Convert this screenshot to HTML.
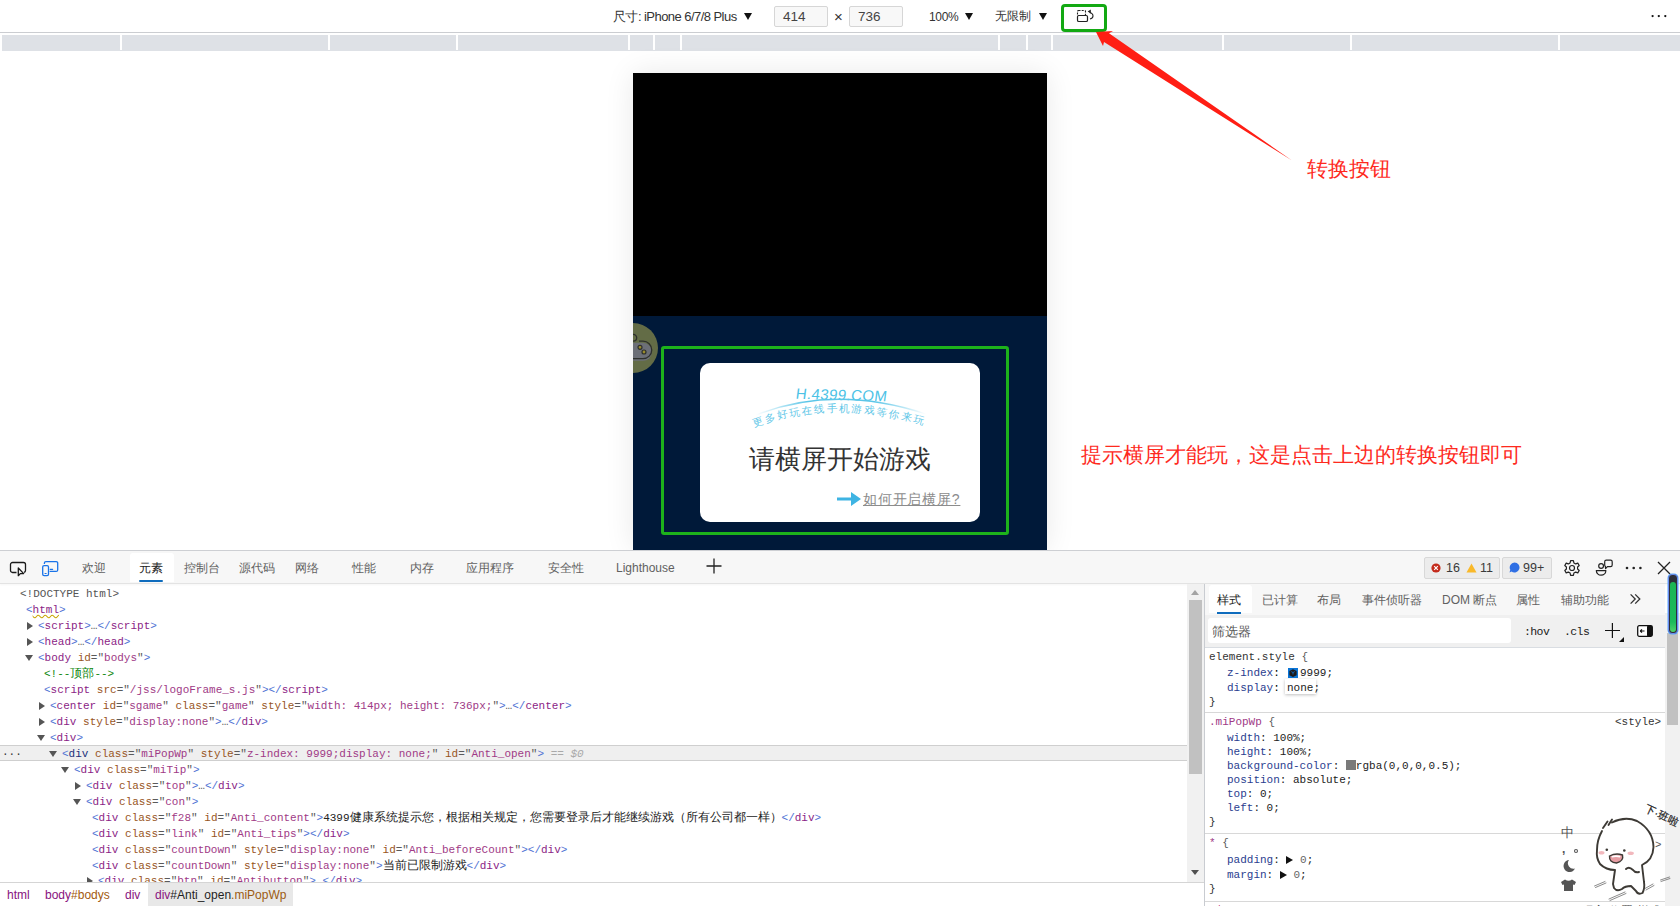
<!DOCTYPE html>
<html><head><meta charset="utf-8">
<style>
*{margin:0;padding:0;box-sizing:border-box}
html,body{width:1680px;height:906px;overflow:hidden;background:#fff;font-family:"Liberation Sans",sans-serif;position:relative}
.a{position:absolute;white-space:nowrap}
.mono{font-family:"Liberation Mono",monospace}
/* toolbar */
#tb{left:0;top:0;width:1680px;height:32px;background:#fff;font-size:13px;color:#333}
#tbline{left:0;top:32px;width:1680px;height:1px;background:#cbcdd1}
#mq{left:2px;top:35px;width:1678px;height:16px;background:#dee1e6}
.sep{top:35px;width:2px;height:15px;background:#fff}
.inp{top:6px;height:21px;border:1px solid #d6d6d6;background:#f8f8f8;border-radius:2px;font-size:13.5px;color:#444;padding-left:8px;line-height:19px}
.tri{width:0;height:0;border-left:4px solid transparent;border-right:4px solid transparent;border-top:7px solid #111}
/* phone */
#phone{left:633px;top:73px;width:414px;height:477px;background:#001939;box-shadow:0 0 28px rgba(0,0,0,.09)}
#black{left:633px;top:73px;width:414px;height:243px;background:#000}
/* devtools */
#dt{left:0;top:550px;width:1680px;height:356px;background:#fff;border-top:1px solid #cdcfd3}
#tabs{left:0;top:551px;width:1680px;height:33px;background:#f7f7f7;border-bottom:1px solid #e3e3e3;box-shadow:0 1px 2px rgba(0,0,0,.04)}
.tab{font-size:12px;color:#616161;top:560px}
.code{font-family:"Liberation Mono",monospace;font-size:11px;line-height:16px;height:16px}
.b{color:#4f72d4}.t{color:#8b1d85}.an{color:#98551d}.av{color:#a03a86}.cm{color:#0b850b}.g{color:#5a5a5a}
.tr{width:0;height:0;border-top:4px solid transparent;border-bottom:4px solid transparent;border-left:6px solid #555}
.td{width:0;height:0;border-left:4px solid transparent;border-right:4px solid transparent;border-top:6px solid #555}
.sp{color:#2a3d8f}
.cj{font-size:12px;font-family:"Liberation Sans",sans-serif;line-height:0}
</style></head><body>

<!-- top toolbar -->
<div class="a" id="tb"></div>
<div class="a" style="left:613px;top:8px;font-size:13px;color:#333;letter-spacing:-0.55px">尺寸: iPhone 6/7/8 Plus</div>
<div class="a tri" style="left:744px;top:13px"></div>
<div class="a inp" style="left:774px;width:54px">414</div>
<div class="a" style="left:834px;top:8px;font-size:15px;color:#333">×</div>
<div class="a inp" style="left:849px;width:54px">736</div>
<div class="a" style="left:929px;top:10px;font-size:12px;color:#333;letter-spacing:-0.3px">100%</div>
<div class="a tri" style="left:965px;top:13px"></div>
<div class="a" style="left:995px;top:8px;font-size:12px;color:#333">无限制</div>
<div class="a tri" style="left:1039px;top:13px"></div>
<div class="a" style="left:1061px;top:4px;width:46px;height:28px;border:3px solid #13a913;border-radius:4px"></div>
<svg class="a" style="left:1075px;top:8px" width="22" height="16" viewBox="0 0 22 16">
 <rect x="2.5" y="2.5" width="8" height="5" rx="1" fill="none" stroke="#222" stroke-width="1.1" stroke-dasharray="2 1.2"/>
 <rect x="2.5" y="7.5" width="10" height="6" rx="1.3" fill="#fff" stroke="#222" stroke-width="1.2"/>
 <path d="M14.5 4.5 C17 5,18 7,18 8 C18 9.5,17 10.5,15 11" fill="none" stroke="#222" stroke-width="1.1"/>
 <path d="M12.6 3.6 L15.8 1.6 L15.9 5.6 Z" fill="#222"/>
</svg>
<svg class="a" style="left:1648px;top:12px" width="22" height="8" viewBox="0 0 22 8"><circle cx="4.6" cy="4.1" r="1.15" fill="#111"/><circle cx="10.8" cy="4.1" r="1.15" fill="#111"/><circle cx="17.3" cy="4.1" r="1.15" fill="#111"/></svg>
<div class="a" id="tbline"></div>
<div class="a" id="mq"></div>
<div class="a sep" style="left:120px"></div>
<div class="a sep" style="left:328px"></div>
<div class="a sep" style="left:456px"></div>
<div class="a sep" style="left:628px"></div>
<div class="a sep" style="left:653px"></div>
<div class="a sep" style="left:680px"></div>
<div class="a sep" style="left:998px"></div>
<div class="a sep" style="left:1026px"></div>
<div class="a sep" style="left:1051px"></div>
<div class="a sep" style="left:1222px"></div>
<div class="a sep" style="left:1350px"></div>
<div class="a sep" style="left:1558px"></div>

<!-- phone -->
<div class="a" id="phone"></div>
<div class="a" id="black"></div>

<!-- devtools -->
<div class="a" id="dt"></div>
<div class="a" id="tabs"></div>
<!-- phone content -->
<div class="a" style="left:633px;top:323px;width:25px;height:50px;border-radius:0 25px 25px 0;background:#636c46"></div>
<svg class="a" style="left:633px;top:323px" width="25" height="50" viewBox="0 0 25 50">
 <path d="M0 19.8 H10 A9 9 0 0 1 10 37.8 H0 Z" fill="#6c6f77"/>
 <path d="M6 18.2 H10 A8.75 8.75 0 0 1 10 35.7 H0" fill="none" stroke="#2e302c" stroke-width="1.3"/>
 <circle cx="0.3" cy="14.8" r="3.4" fill="none" stroke="#2e302c" stroke-width="1.3"/>
 <circle cx="7" cy="24.3" r="2" fill="#9a8c2a" stroke="#2e302c" stroke-width="1.2"/>
 <circle cx="11" cy="29" r="2" fill="#9a8c2a" stroke="#2e302c" stroke-width="1.2"/>
</svg>
<div class="a" style="left:661px;top:346px;width:348px;height:189px;border:3px solid #1db21b;border-radius:3px"></div>
<div class="a" style="left:700px;top:363px;width:280px;height:159px;background:#fff;border-radius:10px"></div>
<svg class="a" style="left:740px;top:375px" width="200" height="60" viewBox="0 0 200 60">
 <defs><linearGradient id="fade" x1="0" x2="1"><stop offset="0" stop-color="#5cc6e8" stop-opacity="0"/><stop offset="0.3" stop-color="#5cc6e8"/><stop offset="0.7" stop-color="#5cc6e8"/><stop offset="1" stop-color="#5cc6e8" stop-opacity="0"/></linearGradient></defs>
 <text x="55" y="25" font-family="Liberation Sans" font-size="15" fill="#4cc2e6" textLength="91" lengthAdjust="spacing" transform="rotate(1.5 100 20) translate(3 0) skewX(-6)">H.4399.COM</text>
 <path d="M16 40 Q95 9 186 39" fill="none" stroke="url(#fade)" stroke-width="1.3"/>
 <path id="arc" d="M14 52 Q95 22 190 52" fill="none"/>
 <text font-family="Liberation Serif" font-size="10.5" fill="#62c7e8" letter-spacing="1.4"><textPath href="#arc">更多好玩在线手机游戏等你来玩</textPath></text>
</svg>
<div class="a" style="left:749px;top:444px;font-size:26px;color:#333;line-height:30px">请横屏开始游戏</div>
<svg class="a" style="left:836px;top:491px" width="26" height="16" viewBox="0 0 26 16"><path d="M1 6.5 H15 V1 L25 8 L15 15 V9.5 H1 Z" fill="#3eb4e3"/></svg>
<div class="a" style="left:863px;top:490px;font-size:14px;color:#8c8c8c;text-decoration:underline;line-height:18px;letter-spacing:0.8px">如何开启横屏?</div>

<!-- annotations -->
<svg class="a" style="left:0;top:0" width="1680" height="200" viewBox="0 0 1680 200">
 <path d="M1096 32 L1113 31 L1109 33.2 L1292 160.5 L1104 42 L1103 46 Z" fill="#ff1e14"/>
</svg>
<div class="a" style="left:1307px;top:157px;font-size:21px;color:#fe2a1e;line-height:24px">转换按钮</div>
<div class="a" style="left:1081px;top:443px;font-size:21px;color:#fe2a1e;line-height:24px">提示横屏才能玩，这是点击上边的转换按钮即可</div>


<!-- devtools tabs -->
<svg class="a" style="left:9px;top:560px" width="19" height="17" viewBox="0 0 19 17">
 <path d="M7.5 12.5 H3.5 A2 2 0 0 1 1.5 10.5 V4.5 A2 2 0 0 1 3.5 2.5 H14.5 A2 2 0 0 1 16.5 4.5 V10.5 A2 2 0 0 1 15 12.4" fill="none" stroke="#1a1a1a" stroke-width="1.3"/>
 <path d="M9.3 8 L9.3 15.7 L11.3 13.6 L14.7 13.6 Z" fill="#f4f4f4" stroke="#1a1a1a" stroke-width="1.3" stroke-linejoin="round"/>
</svg>
<svg class="a" style="left:41px;top:560px" width="18" height="17" viewBox="0 0 18 17">
 <rect x="1.7" y="5.6" width="5.8" height="10" rx="1.4" fill="none" stroke="#1a73e8" stroke-width="1.3"/>
 <path d="M3.4 3.4 V3 A1.5 1.5 0 0 1 4.9 1.6 H15.2 A1.5 1.5 0 0 1 16.7 3.1 V9.9 A1.5 1.5 0 0 1 15.2 11.4 H9.2" fill="none" stroke="#1a73e8" stroke-width="1.3" stroke-linecap="round"/>
 <path d="M9.2 9.3 H11.6" stroke="#1a73e8" stroke-width="1.2" stroke-linecap="round"/>
 <path d="M4 13.5 H5.2" stroke="#1a73e8" stroke-width="1.1" stroke-linecap="round"/>
</svg>
<div class="a tab" style="left:82px">欢迎</div>
<div class="a" style="left:130px;top:553px;width:44px;height:29px;background:#fff;border-radius:3px 3px 0 0"></div>
<div class="a tab" style="left:139px;color:#222">元素</div>
<div class="a" style="left:139px;top:580px;width:24px;height:2px;background:#0f6cbd;border-radius:1px"></div>
<div class="a tab" style="left:184px">控制台</div>
<div class="a tab" style="left:239px">源代码</div>
<div class="a tab" style="left:295px">网络</div>
<div class="a tab" style="left:352px">性能</div>
<div class="a tab" style="left:410px">内存</div>
<div class="a tab" style="left:466px">应用程序</div>
<div class="a tab" style="left:548px">安全性</div>
<div class="a tab" style="left:616px;top:561px">Lighthouse</div>
<svg class="a" style="left:706px;top:558px" width="16" height="16" viewBox="0 0 16 16"><path d="M8 0.5 V15.5 M0.5 8 H15.5" stroke="#222" stroke-width="1.3"/></svg>

<!-- right toolbar -->
<div class="a" style="left:1424px;top:557px;width:76px;height:22px;background:#ececec;border:1px solid #d8d8d8;border-radius:2px"></div>
<div class="a" style="left:1502px;top:557px;width:50px;height:22px;background:#ececec;border:1px solid #d8d8d8;border-radius:2px"></div>
<svg class="a" style="left:1431px;top:563px" width="10" height="10" viewBox="0 0 10 10"><circle cx="5" cy="5" r="4.6" fill="#c42b1c"/><path d="M3.2 3.2 L6.8 6.8 M6.8 3.2 L3.2 6.8" stroke="#fff" stroke-width="1.2"/></svg>
<div class="a" style="left:1446px;top:561px;font-size:12.5px;color:#3a3a3a">16</div>
<svg class="a" style="left:1466px;top:563px" width="11" height="10" viewBox="0 0 11 10"><path d="M5.5 0.5 L10.5 9.5 H0.5 Z" fill="#f9b92a"/></svg>
<div class="a" style="left:1480px;top:561px;font-size:12.5px;color:#3a3a3a">11</div>
<svg class="a" style="left:1509px;top:562px" width="11" height="11" viewBox="0 0 11 11"><path d="M5.5 0.5 A5 5 0 1 1 2.5 9.5 L0.5 10.5 L1.3 7.8 A5 5 0 0 1 5.5 0.5 Z" fill="#2f6fe4"/></svg>
<div class="a" style="left:1523px;top:561px;font-size:12.5px;color:#3a3a3a">99+</div>
<svg class="a" style="left:1563px;top:559px" width="18" height="18" viewBox="0 0 18 18"><path d="M7.6 1.2 H10.4 L10.9 3.4 L12.7 4.4 L14.8 3.6 L16.2 6 L14.6 7.5 V9.5 L16.2 11 L14.8 13.4 L12.7 12.6 L10.9 13.6 L10.4 15.8 H7.6 L7.1 13.6 L5.3 12.6 L3.2 13.4 L1.8 11 L3.4 9.5 V7.5 L1.8 6 L3.2 3.6 L5.3 4.4 L7.1 3.4 Z" fill="none" stroke="#222" stroke-width="1.2" stroke-linejoin="round" transform="translate(0 0.5)"/><circle cx="9" cy="9" r="2.5" fill="none" stroke="#222" stroke-width="1.2"/></svg>
<svg class="a" style="left:1595px;top:559px" width="19" height="18" viewBox="0 0 19 18"><circle cx="6.1" cy="7" r="2.4" fill="none" stroke="#222" stroke-width="1.2"/><path d="M1.3 11.6 H10.9 A4.8 4.6 0 0 1 1.3 11.6 Z" fill="none" stroke="#222" stroke-width="1.2" stroke-linejoin="round"/><path d="M11.3 1.2 H15.6 A1.6 1.6 0 0 1 17.2 2.8 V6 A1.6 1.6 0 0 1 15.6 7.6 H12.4 L10.6 9.6 L10.4 7.4 A1.6 1.6 0 0 1 9.7 6 V2.8 A1.6 1.6 0 0 1 11.3 1.2 Z" fill="none" stroke="#222" stroke-width="1.2" stroke-linejoin="round"/></svg>
<svg class="a" style="left:1624px;top:565px" width="20" height="6" viewBox="0 0 20 6"><circle cx="3" cy="3" r="1.3" fill="#222"/><circle cx="9.7" cy="3" r="1.3" fill="#222"/><circle cx="16.4" cy="3" r="1.3" fill="#222"/></svg>
<svg class="a" style="left:1657px;top:561px" width="14" height="14" viewBox="0 0 14 14"><path d="M1 1 L13 13 M13 1 L1 13" stroke="#222" stroke-width="1.3"/></svg>

<!-- DOM tree -->
<div class="a" style="left:0;top:745px;width:1188px;height:16px;background:#efefef;border-top:1px solid #cfcfcf;border-bottom:1px solid #cfcfcf"></div>
<div class="a code" style="left:20px;top:586px;color:#555">&lt;!DOCTYPE html&gt;</div>
<div class="a code" style="left:26px;top:602px"><span class="b">&lt;</span><span class="t" style="text-decoration:underline wavy #c8a400;text-underline-offset:1px">html</span><span class="b">&gt;</span></div>
<div class="a tr" style="left:27px;top:622px"></div>
<div class="a code" style="left:38px;top:618px"><span class="b">&lt;</span><span class="t">script</span><span class="b">&gt;</span><span class="g">…</span><span class="b">&lt;/</span><span class="t">script</span><span class="b">&gt;</span></div>
<div class="a tr" style="left:27px;top:638px"></div>
<div class="a code" style="left:38px;top:634px"><span class="b">&lt;</span><span class="t">head</span><span class="b">&gt;</span><span class="g">…</span><span class="b">&lt;/</span><span class="t">head</span><span class="b">&gt;</span></div>
<div class="a td" style="left:25px;top:655px"></div>
<div class="a code" style="left:38px;top:650px"><span class="b">&lt;</span><span class="t">body</span> <span class="an">id</span><span class="g">="</span><span class="av">bodys</span><span class="g">"</span><span class="b">&gt;</span></div>
<div class="a code cm" style="left:44px;top:666px">&lt;!--<span class="cj">顶部</span>--&gt;</div>
<div class="a code" style="left:44px;top:682px"><span class="b">&lt;</span><span class="t">script</span> <span class="an">src</span><span class="g">="</span><span class="av">/jss/logoFrame_s.js</span><span class="g">"</span><span class="b">&gt;&lt;/</span><span class="t">script</span><span class="b">&gt;</span></div>
<div class="a tr" style="left:39px;top:702px"></div>
<div class="a code" style="left:50px;top:698px"><span class="b">&lt;</span><span class="t">center</span> <span class="an">id</span><span class="g">="</span><span class="av">sgame</span><span class="g">"</span> <span class="an">class</span><span class="g">="</span><span class="av">game</span><span class="g">"</span> <span class="an">style</span><span class="g">="</span><span class="av">width: 414px; height: 736px;</span><span class="g">"</span><span class="b">&gt;</span><span class="g">…</span><span class="b">&lt;/</span><span class="t">center</span><span class="b">&gt;</span></div>
<div class="a tr" style="left:39px;top:718px"></div>
<div class="a code" style="left:50px;top:714px"><span class="b">&lt;</span><span class="t">div</span> <span class="an">style</span><span class="g">="</span><span class="av">display:none</span><span class="g">"</span><span class="b">&gt;</span><span class="g">…</span><span class="b">&lt;/</span><span class="t">div</span><span class="b">&gt;</span></div>
<div class="a td" style="left:37px;top:735px"></div>
<div class="a code" style="left:50px;top:730px"><span class="b">&lt;</span><span class="t">div</span><span class="b">&gt;</span></div>
<div class="a code" style="left:2px;top:746px;color:#333">···</div>
<div class="a td" style="left:49px;top:751px"></div>
<div class="a code" style="left:62px;top:746px"><span class="b">&lt;</span><span class="t" style="color:#1c2f7a">div</span> <span class="an">class</span><span class="g">="</span><span class="av">miPopWp</span><span class="g">"</span> <span class="an">style</span><span class="g">="</span><span class="av">z-index: 9999;display: none;</span><span class="g">"</span> <span class="an">id</span><span class="g">="</span><span class="av">Anti_open</span><span class="g">"</span><span class="b">&gt;</span> <i style="color:#a9a9a9">== $0</i></div>
<div class="a td" style="left:61px;top:767px"></div>
<div class="a code" style="left:74px;top:762px"><span class="b">&lt;</span><span class="t">div</span> <span class="an">class</span><span class="g">="</span><span class="av">miTip</span><span class="g">"</span><span class="b">&gt;</span></div>
<div class="a tr" style="left:75px;top:782px"></div>
<div class="a code" style="left:86px;top:778px"><span class="b">&lt;</span><span class="t">div</span> <span class="an">class</span><span class="g">="</span><span class="av">top</span><span class="g">"</span><span class="b">&gt;</span><span class="g">…</span><span class="b">&lt;/</span><span class="t">div</span><span class="b">&gt;</span></div>
<div class="a td" style="left:73px;top:799px"></div>
<div class="a code" style="left:86px;top:794px"><span class="b">&lt;</span><span class="t">div</span> <span class="an">class</span><span class="g">="</span><span class="av">con</span><span class="g">"</span><span class="b">&gt;</span></div>
<div class="a code" style="left:92px;top:810px"><span class="b">&lt;</span><span class="t">div</span> <span class="an">class</span><span class="g">="</span><span class="av">f28</span><span class="g">"</span> <span class="an">id</span><span class="g">="</span><span class="av">Anti_content</span><span class="g">"</span><span class="b">&gt;</span><span style="color:#222">4399<span class="cj">健康系统提示您，根据相关规定，您需要登录后才能继续游戏（所有公司都一样）</span></span><span class="b">&lt;/</span><span class="t">div</span><span class="b">&gt;</span></div>
<div class="a code" style="left:92px;top:826px"><span class="b">&lt;</span><span class="t">div</span> <span class="an">class</span><span class="g">="</span><span class="av">link</span><span class="g">"</span> <span class="an">id</span><span class="g">="</span><span class="av">Anti_tips</span><span class="g">"</span><span class="b">&gt;&lt;/</span><span class="t">div</span><span class="b">&gt;</span></div>
<div class="a code" style="left:92px;top:842px"><span class="b">&lt;</span><span class="t">div</span> <span class="an">class</span><span class="g">="</span><span class="av">countDown</span><span class="g">"</span> <span class="an">style</span><span class="g">="</span><span class="av">display:none</span><span class="g">"</span> <span class="an">id</span><span class="g">="</span><span class="av">Anti_beforeCount</span><span class="g">"</span><span class="b">&gt;&lt;/</span><span class="t">div</span><span class="b">&gt;</span></div>
<div class="a code" style="left:92px;top:858px"><span class="b">&lt;</span><span class="t">div</span> <span class="an">class</span><span class="g">="</span><span class="av">countDown</span><span class="g">"</span> <span class="an">style</span><span class="g">="</span><span class="av">display:none</span><span class="g">"</span><span class="b">&gt;</span><span style="color:#222" class="cj">当前已限制游戏</span><span class="b">&lt;/</span><span class="t">div</span><span class="b">&gt;</span></div>
<div class="a" style="left:0;top:873px;width:1188px;height:9px;overflow:hidden">
 <div class="a tr" style="left:87px;top:4px"></div>
 <div class="a code" style="left:98px;top:0px"><span class="b">&lt;</span><span class="t">div</span> <span class="an">class</span><span class="g">="</span><span class="av">btn</span><span class="g">"</span> <span class="an">id</span><span class="g">="</span><span class="av">Antibutton</span><span class="g">"</span><span class="b">&gt;</span><span class="g">…</span><span class="b">&lt;/</span><span class="t">div</span><span class="b">&gt;</span></div>
</div>
<!-- DOM scrollbar -->
<div class="a" style="left:1187px;top:584px;width:17px;height:298px;background:#f1f1f1"></div>
<div class="a" style="left:1189px;top:600px;width:13px;height:174px;background:#c1c1c1"></div>
<div class="a" style="left:1191px;top:590px;width:0;height:0;border-left:4.5px solid transparent;border-right:4.5px solid transparent;border-bottom:5px solid #a3a3a3"></div>
<div class="a" style="left:1191px;top:870px;width:0;height:0;border-left:4.5px solid transparent;border-right:4.5px solid transparent;border-top:5px solid #505050"></div>
<div class="a" style="left:1204px;top:584px;width:1px;height:322px;background:#c9ccd1"></div>
<!-- breadcrumbs -->
<div class="a" style="left:0;top:882px;width:1204px;height:1px;background:#d5d5d5"></div>
<div class="a" style="left:148px;top:883px;width:145px;height:23px;background:#e8e8e8"></div>
<div class="a" style="left:7px;top:888px;font-size:12px;color:#881280">html</div>
<div class="a" style="left:45px;top:888px;font-size:12px;color:#881280">body<span style="color:#a35a0e">#bodys</span></div>
<div class="a" style="left:125px;top:888px;font-size:12px;color:#881280">div</div>
<div class="a" style="left:155px;top:888px;font-size:12px;color:#881280">div<span style="color:#1f1f1f">#Anti_open</span><span style="color:#9c5b12">.miPopWp</span></div>

<!-- styles pane -->
<div class="a" style="left:1205px;top:584px;width:460px;height:31px;background:#f7f7f7"></div>
<div class="a" style="left:1209px;top:585px;width:43px;height:28px;background:#fff;border-radius:3px 3px 0 0"></div>
<div class="a tab" style="left:1217px;top:592px;color:#222">样式</div>
<div class="a" style="left:1217px;top:612px;width:24px;height:2px;background:#0f6cbd"></div>
<div class="a tab" style="left:1262px;top:592px">已计算</div>
<div class="a tab" style="left:1317px;top:592px">布局</div>
<div class="a tab" style="left:1362px;top:592px">事件侦听器</div>
<div class="a tab" style="left:1442px;top:592px">DOM 断点</div>
<div class="a tab" style="left:1516px;top:592px">属性</div>
<div class="a tab" style="left:1561px;top:592px">辅助功能</div>
<svg class="a" style="left:1629px;top:593px" width="13" height="12" viewBox="0 0 13 12"><path d="M1.6 1.4 L6.2 6 L1.6 10.6 M6.2 1.4 L10.8 6 L6.2 10.6" fill="none" stroke="#333" stroke-width="1.3"/></svg>
<div class="a" style="left:1205px;top:615px;width:460px;height:33px;background:#f0f0f0;border-bottom:1px solid #d9dde2"></div>
<div class="a" style="left:1208px;top:618px;width:303px;height:25px;background:#fff;border-radius:3px"></div>
<div class="a" style="left:1212px;top:623px;font-size:13px;color:#555">筛选器</div>
<div class="a mono" style="left:1524px;top:625px;font-size:11.5px;color:#1a1a1a;letter-spacing:-0.6px">:hov</div>
<div class="a mono" style="left:1564px;top:625px;font-size:11.5px;color:#1a1a1a;letter-spacing:-0.6px">.cls</div>
<svg class="a" style="left:1604px;top:622px" width="22" height="22" viewBox="0 0 22 22"><path d="M8.4 1 V16 M1 8.5 H16" stroke="#111" stroke-width="1.2"/><path d="M15 20 L20 15 V20 Z" fill="#111"/></svg>
<svg class="a" style="left:1637px;top:625px" width="16" height="12" viewBox="0 0 16 12"><rect x="0.7" y="0.7" width="14.6" height="10.6" rx="1.5" fill="#fff" stroke="#111" stroke-width="1.3"/><rect x="10" y="0.7" width="5.3" height="10.6" rx="1" fill="#111"/><path d="M3.2 6 H7.5 M3.2 6 L5 4.3 M3.2 6 L5 7.7" stroke="#111" stroke-width="1.1"/></svg>

<!-- styles rules -->
<div class="a code" style="left:1209px;top:649px;color:#333">element.style <span class="g">{</span></div>
<div class="a code" style="left:1227px;top:665px"><span class="sp">z-index</span>: </div>
<svg class="a" style="left:1288px;top:668px" width="10" height="10" viewBox="0 0 10 10"><rect width="10" height="10" fill="#0a74d6"/><path d="M5 1.2 L8.6 3 V7.2 L5 9 L1.4 7.2 V3 Z" fill="#1c1a1a"/><path d="M3.3 3.6 L5 4.6 L6.7 3.6 M5 4.6 V6.5" stroke="#0a74d6" stroke-width="0.8" fill="none"/></svg>
<div class="a code" style="left:1300px;top:665px;color:#222">9999;</div>
<div class="a code" style="left:1227px;top:680px"><span class="sp">display</span>: </div>
<div class="a" style="left:1285px;top:679px;width:31px;height:15px;background:#fff;box-shadow:0 1px 3px rgba(0,0,0,.25)"></div>
<div class="a code" style="left:1287px;top:680px;color:#222">none;</div>
<div class="a code" style="left:1209px;top:694px;color:#333">}</div>
<div class="a" style="left:1205px;top:712px;width:460px;height:1px;background:#d8d8d8"></div>
<div class="a code" style="left:1209px;top:714px"><span class="av">.miPopWp</span> <span class="g">{</span></div>
<div class="a code" style="left:1615px;top:714px;color:#333">&lt;style&gt;</div>
<div class="a code" style="left:1227px;top:730px;color:#222"><span class="sp">width</span>: 100%;</div>
<div class="a code" style="left:1227px;top:744px;color:#222"><span class="sp">height</span>: 100%;</div>
<div class="a code" style="left:1227px;top:758px;color:#222"><span class="sp">background-color</span>: <span style="display:inline-block;width:10px;height:10px;background:#7a7a7a;vertical-align:-1px"></span>rgba(0,0,0,0.5);</div>
<div class="a code" style="left:1227px;top:772px;color:#222"><span class="sp">position</span>: absolute;</div>
<div class="a code" style="left:1227px;top:786px;color:#222"><span class="sp">top</span>: 0;</div>
<div class="a code" style="left:1227px;top:800px;color:#222"><span class="sp">left</span>: 0;</div>
<div class="a code" style="left:1209px;top:814px;color:#333">}</div>
<div class="a" style="left:1205px;top:833px;width:460px;height:1px;background:#d8d8d8"></div>
<div class="a code" style="left:1209px;top:835px"><span class="av">*</span> <span class="g">{</span></div>
<div class="a code" style="left:1227px;top:852px;color:#222"><span class="sp">padding</span>: <span style="display:inline-block;width:0;height:0;border-top:4.5px solid transparent;border-bottom:4.5px solid transparent;border-left:7px solid #111;vertical-align:-1px"></span> <span style="color:#666">0</span>;</div>
<div class="a code" style="left:1227px;top:867px;color:#222"><span class="sp">margin</span>: <span style="display:inline-block;width:0;height:0;border-top:4.5px solid transparent;border-bottom:4.5px solid transparent;border-left:7px solid #111;vertical-align:-1px"></span> <span style="color:#666">0</span>;</div>
<div class="a code" style="left:1209px;top:881px;color:#333">}</div>
<div class="a" style="left:1205px;top:901px;width:460px;height:1px;background:#d8d8d8"></div>
<div class="a" style="left:1668px;top:894px;width:0;height:0;border-left:4px solid transparent;border-right:4px solid transparent;border-top:5px solid #505050"></div>
<!-- styles scrollbar -->
<div class="a" style="left:1665px;top:613px;width:15px;height:293px;background:#f1f1f1"></div>
<div class="a" style="left:1667px;top:633px;width:11px;height:92px;background:#c1c1c1"></div>
<div class="a" style="left:1668px;top:574px;width:10px;height:60px;background:#2d2f3a;border-radius:4px;border:1px solid #6a8cf0;box-shadow:0 0 0 0.5px #55aaff"></div>
<div class="a" style="left:1670px;top:582px;width:6px;height:50px;background:linear-gradient(#1cb555,#1dbb5a 80%,#4fd36a);border-radius:3px"></div>
<!-- IME + mascot -->
<div class="a" style="left:1561px;top:825px;font-size:13px;color:#555;line-height:15px">中</div>
<div class="a" style="left:1562px;top:842px;font-size:12px;color:#555;font-weight:bold">,</div>
<svg class="a" style="left:1573px;top:848px" width="6" height="6" viewBox="0 0 6 6"><circle cx="3" cy="3" r="1.5" fill="none" stroke="#555" stroke-width="1.1"/></svg>
<svg class="a" style="left:1562px;top:859px" width="14" height="14" viewBox="0 0 14 14"><path d="M7 1 A6 6 0 1 0 13 9.5 A5.5 5.5 0 0 1 7 1 Z" fill="#555"/></svg>
<svg class="a" style="left:1560px;top:879px" width="17" height="13" viewBox="0 0 17 13"><path d="M5 0.5 L1 3 L2.5 6 L4 5.5 V12 H13 V5.5 L14.5 6 L16 3 L12 0.5 Q8.5 3 5 0.5 Z" fill="#555"/></svg>
<svg class="a" style="left:1590px;top:800px" width="90" height="106" viewBox="40 0 90 106">
 <g fill="none" stroke="#3d3a35" stroke-width="1.9" stroke-linecap="round" stroke-linejoin="round">
 <path d="M62 22.5 Q75 16 87 21 Q103 30 103.5 47 Q103 60 92 65 L94 82 Q95 88 92.5 93 Q88 95 86 91 L81 86 Q75 86 72 89 Q67 92 64 88 L63 84 L65 70 Q56 70 50 64 Q46 58 47 50 Q47 40 52 31" fill="#fff"/>
 <path d="M76 69 Q79 66 83 70 Q85 73 89 72"/>
 <path d="M53 28 L57.5 21.5 M58.5 25 L62 19.5"/>
 </g>
 <circle cx="56.8" cy="49.7" r="1.3" fill="#3d3a35"/>
 <circle cx="74.3" cy="50.5" r="1.3" fill="#3d3a35"/>
 <ellipse cx="51.5" cy="52.8" rx="3" ry="1.8" fill="#f2b8bd"/>
 <ellipse cx="80.7" cy="53.3" rx="3.2" ry="1.8" fill="#f2b8bd"/>
 <path d="M59.5 56 Q66 52.5 72.5 55 Q74 61 66.5 63 Q59 62.5 59.5 56 Z" fill="#e79ea4" stroke="#3d3a35" stroke-width="1.4"/>
 <path d="M61.5 56 Q66 54.3 70.5 56 L70 57.5 Q66 56.5 62 57.5 Z" fill="#fff"/>
 <g stroke="#555" stroke-width="0.8" stroke-linecap="round" opacity="0.85">
 <path d="M44.5 86 L55 81.5 M45.5 87.5 L56 83"/>
 <path d="M59 99 L75 92 M60 100.5 L76 93.5"/>
 <path d="M95 88.5 L103 84 M96 90 L104 85.5"/>
 <path d="M110.5 80 L119.5 77 M111 81.5 L120 78.5"/>
 </g>
 <text x="0" y="0" font-family="Liberation Sans" font-size="10.5" fill="#222" stroke="#222" stroke-width="0.25" transform="translate(93.5 11) rotate(25)">下·班啦</text>
</svg>
<div class="a" style="left:1655px;top:838px;font-size:11px;color:#555">&gt;</div>
<div class="a" style="left:1205px;top:902px;width:460px;height:4px;overflow:hidden">
 <div class="a" style="left:12px;top:1px;font-size:12px;color:#c2185b">*</div>
 <div class="a" style="left:376px;top:1px;font-size:12px;color:#444">距离(位置)样式.0.2</div>
</div>
</body></html>
